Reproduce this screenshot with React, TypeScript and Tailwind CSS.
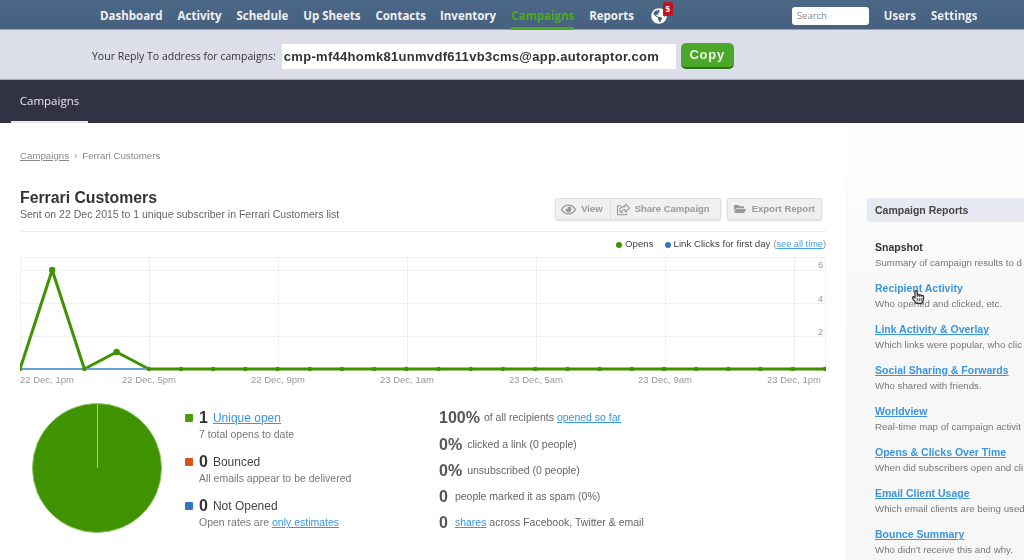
import React from "react";
import { FaGlobeAmericas, FaRegEye, FaRegShareSquare, FaFolderOpen, FaRegHandPointer } from "react-icons/fa";

const navItems = ["Dashboard", "Activity", "Schedule", "Up Sheets", "Contacts", "Inventory"];

const reports = [
  { title: "Recipient Activity", desc: "Who opened and clicked, etc.", plain: true },
  { title: "Link Activity & Overlay", desc: "Which links were popular, who clic" },
  { title: "Social Sharing & Forwards", desc: "Who shared with friends." },
  { title: "Worldview", desc: "Real-time map of campaign activit" },
  { title: "Opens & Clicks Over Time", desc: "When did subscribers open and cli" },
  { title: "Email Client Usage", desc: "Which email clients are being used" },
  { title: "Bounce Summary", desc: "Who didn't receive this and why." },
];

const xLabels = [
  { t: "22 Dec, 1pm", cls: "w-[102px]" },
  { t: "22 Dec, 5pm", cls: "w-[129px]" },
  { t: "22 Dec, 9pm", cls: "w-[129px]" },
  { t: "23 Dec, 1am", cls: "w-[129px]" },
  { t: "23 Dec, 5am", cls: "w-[129px]" },
  { t: "23 Dec, 9am", cls: "w-[129px]" },
  { t: "23 Dec, 1pm", cls: "" },
];

const Chart = () => {
  const step = 32.2;
  const base = 112;
  const ys = [base, 13, base, 95];
  const pts: string[] = [];
  const dots: React.ReactNode[] = [];
  for (let i = 0; i < 26; i++) {
    const x = i * step;
    const y = ys[i] ?? base;
    pts.push(`${x},${y}`);
    dots.push(<circle key={i} cx={x} cy={y} r={i === 1 || i === 3 ? 3.2 : 2.2} fill="#3f9200" />);
  }
  return (
    <svg width="806" height="114" viewBox="0 0 806 114" className="block">
      <rect x="0.5" y="0.5" width="805" height="112" fill="#fff" stroke="#efefef" />
      {[13, 46, 79].map((y) => (
        <line key={y} x1="0" x2="806" y1={y + 0.5} y2={y + 0.5} stroke="#efefef" />
      ))}
      {[129, 258, 387, 516, 645, 774].map((x) => (
        <line key={x} y1="0" y2="113" x1={x + 0.5} x2={x + 0.5} stroke="#efefef" />
      ))}
      <polyline points={pts.join(" ")} fill="none" stroke="#3f9200" strokeWidth="3" strokeLinejoin="round" />
      <line x1="2" x2="126" y1="112" y2="112" stroke="#6a9fdc" strokeWidth="2" />
      {dots}
      <text x="803" y="11" textAnchor="end" fontSize="9" fill="#999">6</text>
      <text x="803" y="45" textAnchor="end" fontSize="9" fill="#999">4</text>
      <text x="803" y="78" textAnchor="end" fontSize="9" fill="#999">2</text>
    </svg>
  );
};

const StatusRow = ({
  color,
  num,
  children,
  sub,
}: {
  color: string;
  num: string;
  children: React.ReactNode;
  sub: React.ReactNode;
}) => (
  <div className="h-[44px]">
    <div className="flex items-center h-[20px]">
      <span className={`w-[8px] h-[8px] rounded-[1px] mr-[6px] ${color}`} />
      <span className="text-[16px] font-bold text-[#333] mr-[5px]">{num}</span>
      <span className="text-[12px] text-[#444]">{children}</span>
    </div>
    <div className="pl-[14px] text-[10.5px] leading-[12px] text-[#777]">{sub}</div>
  </div>
);

const StatRow = ({ num, gap, children }: { num: string; gap: string; children: React.ReactNode }) => (
  <div className="flex items-center h-[26px] first:mb-px">
    <span className={`text-[16px] font-bold text-[#555] ${gap}`}>{num}</span>
    <span className="text-[10.5px] text-[#666]">{children}</span>
  </div>
);

export default function App() {
  return (
    <div className="w-[1024px] h-[560px] overflow-hidden bg-white">
      <div className="h-[560px] blur-[0.4px] font-['Liberation_Sans',sans-serif]">
        <header className="h-[30px] flex items-center bg-gradient-to-b from-[#4b6886] to-[#47617f] border-b border-[#8fa3bd] pl-[100px] pt-[2px] font-['Open_Sans',sans-serif] text-[11.5px] font-bold text-[#eef1f5]">
          {navItems.map((n, i) => (
            <a key={n} className={["mr-[15px]", "mr-[15px]", "mr-[15px]", "mr-[15px]", "mr-[14px]", "mr-[15px]"][i]}>
              {n}
            </a>
          ))}
          <a className="h-[28px] w-[63px] leading-[28px] text-[#4ea81e] border-b-[3px] border-[#4ea81e] -mb-px text-center mr-[15px] whitespace-nowrap">
            Campaigns
          </a>
          <a className="mr-[17px]">Reports</a>
          <span className="relative w-[16px] h-[16px] mr-[125px]">
            <FaGlobeAmericas size={16} color="#fff" />
            <span className="absolute -top-[6px] left-[12px] w-[10px] h-[14px] rounded-[2px] bg-[#c0141f] text-white text-[8px] leading-[14px] text-center">
              5
            </span>
          </span>
          <input
            readOnly
            placeholder="Search"
            className="w-[77px] h-[18px] rounded-[3px] bg-white px-[5px] text-[9.5px] font-normal placeholder-[#888] mr-[15px]"
          />
          <a className="mr-[15px]">Users</a>
          <a>Settings</a>
        </header>

        <div className="h-[50px] flex items-center bg-[#dcdfe9] pl-[92px] pt-[3px] border-b border-[#a9acb8]">
          <span className="font-['Open_Sans',sans-serif] text-[10.5px] text-[#333] mr-[6px] mt-[2px]">Your Reply To address for campaigns:</span>
          <div className="w-[394px] h-[25px] bg-white text-[13px] font-bold tracking-[0.3px] leading-[25px] pl-[2px] text-[#333] mr-[5px] whitespace-nowrap">
            cmp-mf44homk81unmvdf611vb3cms@app.autoraptor.com
          </div>
          <button className="w-[53px] h-[26px] rounded-[5px] bg-[#4ca82b] border-b-2 border-[#2f6f17] text-[#eef5e6] text-[13px] font-bold tracking-[0.8px]">
            Copy
          </button>
        </div>

        <div className="h-[43px] bg-[#313345] pl-[11px] flex items-end">
          <div className="w-[77px] h-[42px] border-b-[2px] border-[#e9e9ec] text-center leading-[40px] font-['Open_Sans',sans-serif] text-[11.5px] text-[#e8e8ec]">
            Campaigns
          </div>
        </div>

        <div className="flex h-[437px]">
          <main className="w-[846px] pl-[20px] pr-[20px] pt-[26px]">
            <div className="text-[9.7px] text-[#888] h-[14px] leading-[14px]">
              <a className="underline">Campaigns</a>
              <span className="mx-[5px]">›</span>
              Ferrari Customers
            </div>

            <div className="flex justify-between mt-[25px] pb-[11px] border-b border-[#ececec] h-[44px]">
              <div>
                <h1 className="text-[15.8px] leading-[18px] font-bold text-[#333] mt-[1px]">Ferrari Customers</h1>
                <p className="text-[10.5px] leading-[14px] text-[#666]">
                  Sent on 22 Dec 2015 to 1 unique subscriber in Ferrari Customers list
                </p>
              </div>
              <div className="flex items-start gap-[6px] pr-[4px] text-[9.5px] font-bold text-[#999] pt-[10px]">
                <div className="flex h-[22px] rounded-[2px] bg-[#f0f0f0] border border-[#dedede] shadow-sm">
                  <span className="flex items-center gap-[5px] pl-[5px] pr-[7px] border-r border-[#dedede]">
                    <FaRegEye size={15} /> View
                  </span>
                  <span className="flex items-center gap-[5px] pl-[6px] pr-[10px]">
                    <FaRegShareSquare size={13} /> Share Campaign
                  </span>
                </div>
                <span className="flex items-center gap-[6px] h-[22px] pl-[6px] pr-[6px] rounded-[2px] bg-[#f0f0f0] border border-[#dedede] shadow-sm">
                  <FaFolderOpen size={12} /> Export Report
                </span>
              </div>
            </div>

            <div className="flex justify-end items-center h-[25px] text-[9.7px] text-[#444]">
              <span className="w-[6px] h-[6px] rounded-full bg-[#3f9200] mr-[3px]" />
              Opens
              <span className="w-[6px] h-[6px] rounded-full bg-[#2f78c4] ml-[11px] mr-[3px]" />
              Link Clicks for first day
              <span className="ml-[3px] text-[9.2px] text-[#888]">
                (<a className="text-[#4a9fe0] underline">see all time</a>)
              </span>
            </div>

            <Chart />

            <div className="flex text-[9.5px] text-[#999] h-[14px] leading-[14px] mt-[2px]">
              {xLabels.map((l) => (
                <span key={l.t} className={`shrink-0 ${l.cls}`}>
                  {l.t}
                </span>
              ))}
            </div>

            <div className="flex mt-[16px]">
              <div className="relative w-[130px] h-[130px] ml-[12px] rounded-full bg-[#3f9200] border border-[#8dc262]">
                <span className="absolute left-[64px] top-0 w-px h-[64px] bg-[#a9cf8b]" />
              </div>
              <div className="ml-[23px] w-[254px] mt-[5px]">
                <StatusRow color="bg-[#4a9a12]" num="1" sub="7 total opens to date">
                  <a className="text-[#3c96dc] underline">Unique open</a>
                </StatusRow>
                <StatusRow color="bg-[#d9531e]" num="0" sub="All emails appear to be delivered">
                  Bounced
                </StatusRow>
                <StatusRow
                  color="bg-[#3277bd]"
                  num="0"
                  sub={
                    <>
                      Open rates are <a className="text-[#3c96dc] underline">only estimates</a>
                    </>
                  }
                >
                  Not Opened
                </StatusRow>
              </div>
              <div className="mt-[2px]">
                <StatRow num="100%" gap="mr-[4px]">
                  of all recipients <a className="text-[#3c96dc] underline">opened so far</a>
                </StatRow>
                <StatRow num="0%" gap="mr-[5px]">clicked a link (0 people)</StatRow>
                <StatRow num="0%" gap="mr-[5px]">unsubscribed (0 people)</StatRow>
                <StatRow num="0" gap="mr-[7px]">people marked it as spam (0%)</StatRow>
                <StatRow num="0" gap="mr-[7px]">
                  <a className="text-[#3c96dc] underline">shares</a> across Facebook, Twitter &amp; email
                </StatRow>
              </div>
            </div>
          </main>

          <aside className="flex-1 min-w-0 overflow-hidden bg-gradient-to-b from-[#fefefe] to-[#f7f7f8] to-50% pl-[21px] pt-[75px]">
            <div className="h-[24px] w-[157px] rounded-l-[3px] bg-[#e6e9f1] pl-[8px] leading-[24px] text-[10.5px] font-bold text-[#444] whitespace-nowrap">
              Campaign Reports
            </div>
            <div className="mt-[17px] pl-[8px] w-[157px] whitespace-nowrap">
              <div className="h-[41px]">
                <div className="text-[10.5px] leading-[16px] font-bold text-[#333]">Snapshot</div>
                <div className="text-[9.7px] leading-[16px] text-[#777]">Summary of campaign results to d</div>
              </div>
              {reports.map((r) => (
                <div key={r.title} className="relative h-[41px]">
                  <div className={`text-[10.5px] leading-[16px] font-bold text-[#3c96dc] ${r.plain ? "" : "underline"}`}>{r.title}</div>
                  <div className="text-[9.7px] leading-[16px] text-[#777]">{r.desc}</div>
                  {r.plain && (
                    <span className="absolute left-[36px] top-[10px] text-[#333]">
                      <FaRegHandPointer size={14} className="fill-[#333]" />
                    </span>
                  )}
                </div>
              ))}
            </div>
          </aside>
        </div>
      </div>
    </div>
  );
}
